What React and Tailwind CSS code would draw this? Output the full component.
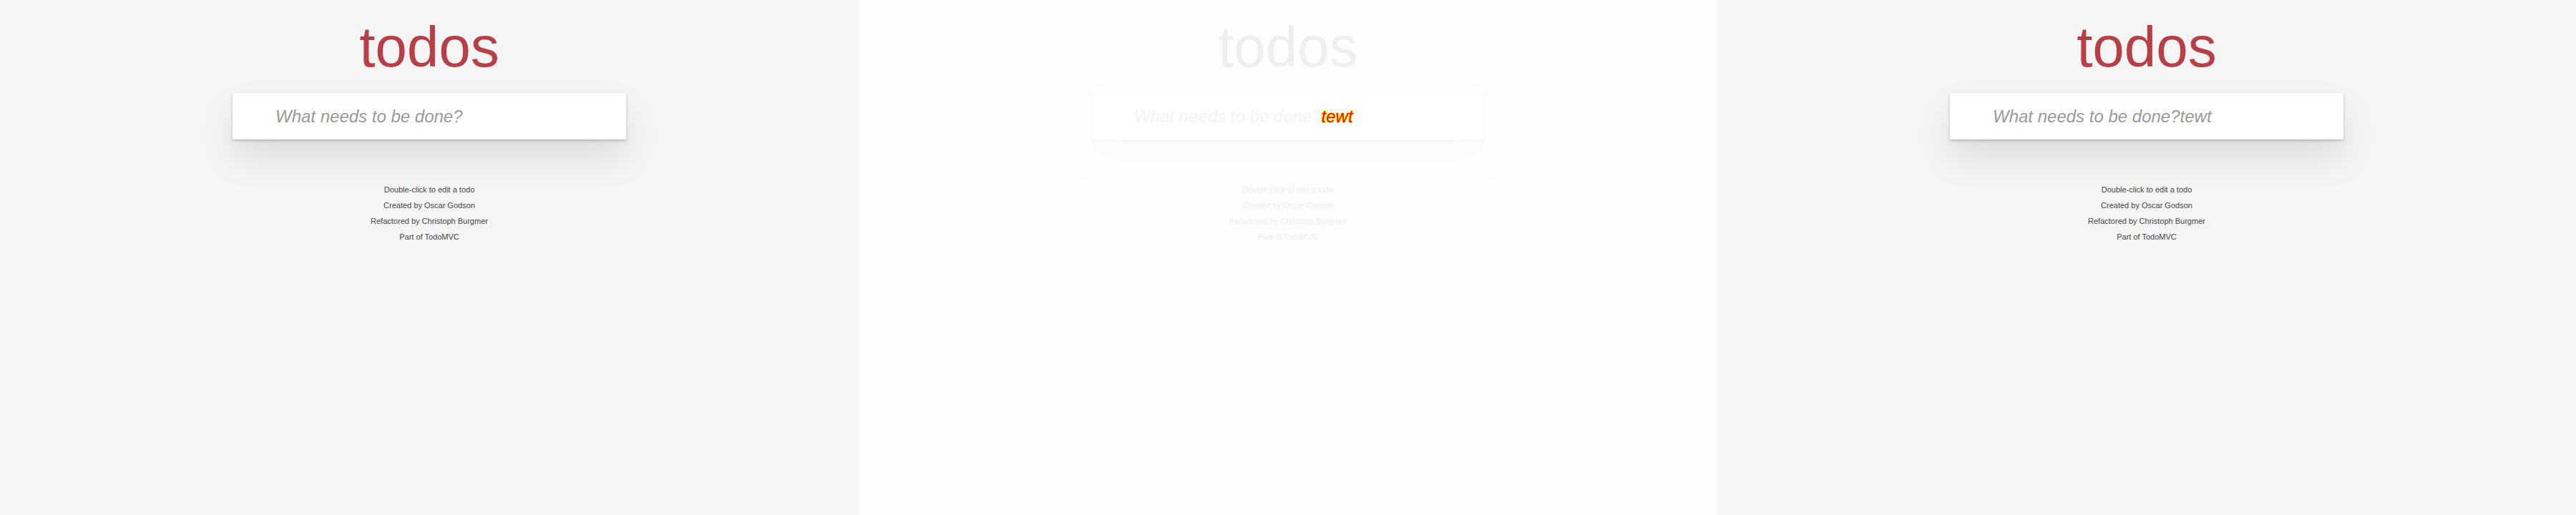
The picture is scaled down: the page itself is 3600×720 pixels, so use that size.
const lines = ['Double-click to edit a todo', 'Created by Oscar Godson', 'Refactored by Christoph Burgmer', 'Part of TodoMVC'];

const themes = {
  full: {
    page: 'bg-[#f5f5f5]',
    title: 'text-[#b83f45]',
    input: 'text-[#999]',
    shadow: '',
    footer: 'text-[#444]',
    added: '',
  },
  faded: {
    page: 'bg-[#fefefe]',
    title: 'text-[#efefef]',
    input: 'text-[#f4f4f4]',
    shadow: 'before:opacity-10',
    footer: 'text-[#ededed]',
    added: 'text-[#ff0000] [paint-order:stroke_fill] [-webkit-text-stroke:2px_#ffff00]',
  },
};

function Panel({ theme, added }) {
  const t = themes[theme];
  return (
    <section className={`h-[720px] w-[1200px] pt-[10px] ${t.page}`}>
      <div className="mx-auto w-[550px]">
        <h1 className={`h-[120px] text-center text-[80px] leading-[112px] font-normal ${t.title}`}>todos</h1>
        <div className={`relative isolate h-[65px] bg-white pl-[60px] text-[24px] leading-[65px] italic before:absolute before:inset-0 before:-z-10 before:shadow-[inset_0_-2px_1px_rgba(0,0,0,0.03),0_2px_4px_0_rgba(0,0,0,0.2),0_25px_50px_0_rgba(0,0,0,0.1)] ${t.input} ${t.shadow}`}>
          What needs to be done?<span className={t.added}>{added}</span>
        </div>
        <footer className={`relative mt-[65px] text-center text-[11px] ${t.footer}`}>
          {lines.map((l) => <p key={l} className="mb-[11px] leading-[11px]">{l}</p>)}
        </footer>
      </div>
    </section>
  );
}

export default function App() {
  return (
    <main className="flex h-[720px] w-[3600px] overflow-hidden bg-white font-['Liberation_Sans',Arial,sans-serif]">
      <Panel theme="full" added="" />
      <Panel theme="faded" added="tewt" />
      <Panel theme="full" added="tewt" />
    </main>
  );
}
